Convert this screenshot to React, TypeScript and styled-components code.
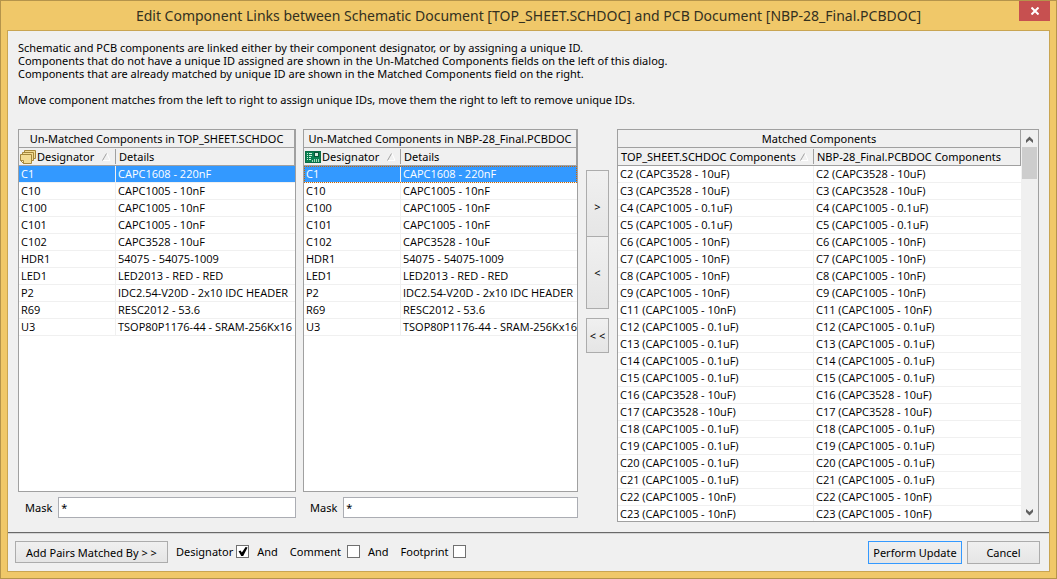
import React from "react";
import styled, { createGlobalStyle, css } from "styled-components";

const GlobalStyle = createGlobalStyle`
  *, *::before, *::after { box-sizing: border-box; }
  body { margin: 0; }
  body, button, input {
    font-family: "Noto Sans", "Open Sans", sans-serif;
    font-size: 11px;
    line-height: 13px;
    color: #000;
  }
`;

const Window = styled.div`
  display: flex;
  flex-direction: column;
  min-height: 100vh;
  padding: 0 6px 6px;
  background: #f0c869;
  border: 1px solid #b5944b;
`;

const TitleBar = styled.header`
  display: flex;
  position: relative;
  justify-content: center;
  height: 29px;
`;

const Title = styled.h1`
  margin: 0;
  font-family: "Noto Sans", "Open Sans", sans-serif;
  font-size: 14px;
  font-weight: 400;
  line-height: 29px;
  color: #33301f;
  white-space: nowrap;
`;

const CloseButton = styled.button`
  position: absolute;
  top: 0;
  right: 0;
  display: flex;
  align-items: center;
  justify-content: center;
  width: 31px;
  height: 20px;
  padding: 0;
  border: 0;
  background: #c75050;
`;

const Client = styled.main`
  display: flex;
  flex: 1;
  flex-direction: column;
  background: #f0f0f0;
  border: 1px solid #c9a552;
`;

const Intro = styled.section`
  padding: 10px 10px 0;
  height: 98px;
  white-space: nowrap;
`;

const Paragraph = styled.p`
  margin: 0 0 13px;
`;

const Workspace = styled.section`
  display: grid;
  grid-template-columns: 560fr 23px 422fr;
  column-gap: 8px;
  flex: 1;
  padding: 0 10px 10px;
`;

const UnmatchedPair = styled.div`
  display: grid;
  grid-template-columns: 278fr 275fr;
  column-gap: 7px;
  padding-bottom: 4px;
  min-width: 0;
`;

const UnmatchedColumn = styled.div`
  display: flex;
  flex-direction: column;
  gap: 5px;
  min-width: 0;
`;

const Panel = styled.div`
  display: flex;
  flex: 1;
  min-width: 0;
  background: #fff;
  border: 1px solid #a0a0a0;
`;

const TableArea = styled.div`
  flex: 1;
  min-width: 0;
`;

const Table = styled.table`
  width: 100%;
  table-layout: fixed;
  border-collapse: separate;
  border-spacing: 0;
`;

const Column = styled.col<{ $width?: string }>`
  width: ${(p) => p.$width ?? "auto"};
`;

const headCell = css`
  height: 18px;
  padding: 0 0 0 3px;
  font-weight: 400;
  background: #f0f0f0;
  border-bottom: 1px solid #a0a0a0;
  white-space: nowrap;
  overflow: hidden;
`;

const GroupHead = styled.th`
  ${headCell}
  padding: 0;
  text-align: center;
  border-right: 1px solid #a0a0a0;
`;

const ColumnHead = styled.th<{ $last?: boolean; $icon?: boolean }>`
  ${headCell}
  padding-left: ${(p) => (p.$icon ? 1 : 3)}px;
  text-align: left;
  border-right: ${(p) => (p.$last ? "1px solid #a0a0a0" : "0")};
`;

const HeadContent = styled.span<{ $gap: number }>`
  display: flex;
  align-items: center;
  gap: ${(p) => p.$gap}px;
  height: 15px;
  border-right: 1px solid #a0a0a0;

  svg { flex: none; }
`;

const SortSlot = styled.span`
  display: flex;
  padding-left: 7px;
`;

const Row = styled.tr<{ $selected?: boolean; $focused?: boolean }>`
  background: ${(p) => (p.$selected ? "#3399ff" : "#fff")};
  color: ${(p) => (p.$selected ? "#fff" : "#000")};
  outline: ${(p) => (p.$focused ? "1px dotted #cc6600" : "none")};
  outline-offset: -1px;
`;

const Cell = styled.td`
  height: 17px;
  padding: 0 0 2px 2px;
  font-family: "Open Sans", "Noto Sans", sans-serif;
  border-bottom: 1px solid #f0f0f0;
  white-space: nowrap;
  overflow: hidden;

  &:first-child { border-right: 1px solid #f0f0f0; }
`;

const MatchedTable = styled(Table)`
  tbody tr:last-child td {
    height: 15px;
    padding-bottom: 0;
    border-bottom: 0;
  }
`;

const MaskRow = styled.label`
  display: flex;
  align-items: center;
  gap: 6px;
  padding-left: 7px;
`;

const MaskInput = styled.input`
  flex: 1;
  min-width: 0;
  height: 21px;
  padding: 0 2px;
  background: #fff;
  border: 1px solid #abadb3;
  border-radius: 0;
`;

const Movers = styled.div`
  display: flex;
  flex-direction: column;
  padding-top: 41px;
`;

const buttonFace = css`
  padding: 0;
  border: 1px solid #acacac;
  border-radius: 0;
  background: linear-gradient(#f0f0f0, #e5e5e5);
`;

const MoveButton = styled.button<{ $height: number; $offset?: number }>`
  ${buttonFace}
  height: ${(p) => p.$height}px;
  margin-top: ${(p) => p.$offset ?? 0}px;
  white-space: nowrap;
`;

const ScrollBar = styled.div`
  display: flex;
  flex-direction: column;
  align-items: center;
  width: 17px;
  padding: 6px 1px 5px;
  background: #f0f0f0;
`;

const ScrollTrack = styled.div`
  flex: 1;
  align-self: stretch;
  padding-top: 4px;
`;

const ScrollThumb = styled.div`
  height: 32px;
  background: #cdcdcd;
`;

const Footer = styled.footer`
  display: flex;
  align-items: flex-start;
  height: 39px;
  padding: 8px 9px 0 7px;
  border-top: 1px solid #696969;
  box-shadow: inset 0 1px 0 #d4d4d4;
`;

const PushButton = styled.button<{ $width: number; $primary?: boolean; $short?: boolean }>`
  ${buttonFace}
  width: ${(p) => p.$width}px;
  height: ${(p) => (p.$short ? 22 : 23)}px;
  border-color: ${(p) => (p.$primary ? "#3399ff" : "#acacac")};
`;

const Criteria = styled.div`
  display: flex;
  flex: 1;
  align-items: center;
  height: 21px;
  padding-left: 8px;
`;

const Criterion = styled.label<{ $gap: number }>`
  display: flex;
  align-items: center;
  gap: ${(p) => p.$gap}px;
`;

const Joiner = styled.span`
  margin: 0 12px 0 8px;
`;

const CheckBox = styled.input`
  appearance: none;
  width: 13px;
  height: 13px;
  margin: 0;
  background: #fff;
  border: 1px solid #707070;

  &:checked::before {
    content: "";
    display: block;
    width: 11px;
    height: 11px;
    background: #000;
    clip-path: polygon(12% 48%, 30% 42%, 42% 60%, 76% 8%, 94% 14%, 54% 92%, 36% 92%);
  }
`;

const Actions = styled.div`
  display: flex;
  gap: 5px;
`;

const SheetsIcon = () => (
  <svg width="16" height="14" viewBox="0 0 16 14" aria-hidden="true">
    <g fill="#f3dc94" stroke="#a5873c">
      <path d="M4.5 .5h11v8h-11z" />
      <path d="M2.5 2.5h11v8h-11z" />
      <path d="M.5 4.5h11v9H3.500l-3-3z" />
      <path d="M.5 10.500h3v3z" fill="#fff6d0" />
    </g>
  </svg>
);

const BoardIcon = () => (
  <svg width="16" height="13" viewBox="0 0 16 13" aria-hidden="true">
    <path d="M0 1h16v12H0z" fill="#0a6b45" />
    <path d="M1 2h14v10H1z" fill="#0b8152" />
    <path d="M2 3h1v1H2zM2 5h1v1H2zM2 7h1v1H2zM2 9h1v1H2zM4 3h3v1H4zM4 5h3v1H4zM4 7h2v1H4zM4 9h2v1H4z" fill="#cdeedb" />
    <path d="M9 2h5v5H9z" fill="#0a5438" />
    <path d="M10 3h3v3h-3z" fill="#d5ecde" />
    <path d="M7 10h1v2H7zM9 9h1v3H9zM11 9h1v3h-1zM13 9h1v3h-1z" fill="#a4d8bb" />
  </svg>
);

const SortIcon = () => (
  <svg width="9" height="8" viewBox="0 0 9 8" aria-hidden="true">
    <path d="M5 .5l3 7H1" fill="none" stroke="#fff" />
    <path d="M.5 7.500L4.500 .5" fill="none" stroke="#a0a0a0" />
  </svg>
);

const Arrow = ({ down }: { down?: boolean }) => (
  <svg width="9" height="7" viewBox="0 0 9 7" aria-hidden="true">
    <path
      d={down ? "M1 0l3.500 3L8 0v3L4.500 6.500 1 3z" : "M1 7l3.500-3L8 7V4L4.500 .5 1 4z"}
      fill="#606060"
    />
  </svg>
);

const unmatched = [
  ["C1", "CAPC1608 - 220nF"],
  ["C10", "CAPC1005 - 10nF"],
  ["C100", "CAPC1005 - 10nF"],
  ["C101", "CAPC1005 - 10nF"],
  ["C102", "CAPC3528 - 10uF"],
  ["HDR1", "54075 - 54075-1009"],
  ["LED1", "LED2013 - RED - RED"],
  ["P2", "IDC2.54-V20D - 2x10 IDC HEADER"],
  ["R69", "RESC2012 - 53.6"],
  ["U3", "TSOP80P1176-44 - SRAM-256Kx16"],
];

const matched = [
  "C2 (CAPC3528 - 10uF)",
  "C3 (CAPC3528 - 10uF)",
  "C4 (CAPC1005 - 0.1uF)",
  "C5 (CAPC1005 - 0.1uF)",
  "C6 (CAPC1005 - 10nF)",
  "C7 (CAPC1005 - 10nF)",
  "C8 (CAPC1005 - 10nF)",
  "C9 (CAPC1005 - 10nF)",
  "C11 (CAPC1005 - 10nF)",
  "C12 (CAPC1005 - 0.1uF)",
  "C13 (CAPC1005 - 0.1uF)",
  "C14 (CAPC1005 - 0.1uF)",
  "C15 (CAPC1005 - 0.1uF)",
  "C16 (CAPC3528 - 10uF)",
  "C17 (CAPC3528 - 10uF)",
  "C18 (CAPC1005 - 0.1uF)",
  "C19 (CAPC1005 - 0.1uF)",
  "C20 (CAPC1005 - 0.1uF)",
  "C21 (CAPC1005 - 0.1uF)",
  "C22 (CAPC1005 - 10nF)",
  "C23 (CAPC1005 - 10nF)",
];

type UnmatchedProps = { title: string; icon: React.ReactNode; focused?: boolean };

const Unmatched = ({ title, icon, focused }: UnmatchedProps) => (
  <UnmatchedColumn>
    <Panel>
      <TableArea>
        <Table>
          <colgroup>
            <Column $width="97px" />
            <Column />
          </colgroup>
          <thead>
            <tr>
              <GroupHead colSpan={2}>{title}</GroupHead>
            </tr>
            <tr>
              <ColumnHead $icon>
                <HeadContent $gap={1}>
                  {icon}
                  Designator
                  <SortSlot>
                    <SortIcon />
                  </SortSlot>
                </HeadContent>
              </ColumnHead>
              <ColumnHead $last>Details</ColumnHead>
            </tr>
          </thead>
          <tbody>
            {unmatched.map(([name, details], i) => (
              <Row key={name} $selected={i === 0} $focused={focused && i === 0}>
                <Cell>{name}</Cell>
                <Cell>{details}</Cell>
              </Row>
            ))}
          </tbody>
        </Table>
      </TableArea>
    </Panel>
    <MaskRow>
      Mask
      <MaskInput type="text" defaultValue="*" />
    </MaskRow>
  </UnmatchedColumn>
);

export default function App() {
  return (
    <>
      <GlobalStyle />
      <Window>
        <TitleBar>
          <Title>
            Edit Component Links between Schematic Document [TOP_SHEET.SCHDOC] and PCB Document [NBP-28_Final.PCBDOC]
          </Title>
          <CloseButton type="button" aria-label="Close">
            <svg width="8" height="8" viewBox="0 0 8 8" aria-hidden="true">
              <path d="M.5 .5l7 7M7.500 .5l-7 7" stroke="#fff" strokeWidth="2" />
            </svg>
          </CloseButton>
        </TitleBar>
        <Client>
          <Intro>
            <Paragraph>
              Schematic and PCB components are linked either by their component designator, or by assigning a unique ID.
              <br />
              Components that do not have a unique ID assigned are shown in the Un-Matched Components fields on the left of this dialog.
              <br />
              Components that are already matched by unique ID are shown in the Matched Components field on the right.
            </Paragraph>
            <Paragraph>
              Move component matches from the left to right to assign unique IDs, move them the right to left to remove unique IDs.
            </Paragraph>
          </Intro>
          <Workspace>
            <UnmatchedPair>
              <Unmatched title="Un-Matched Components in TOP_SHEET.SCHDOC" icon={<SheetsIcon />} />
              <Unmatched title="Un-Matched Components in NBP-28_Final.PCBDOC" icon={<BoardIcon />} focused />
            </UnmatchedPair>
            <Movers>
              <MoveButton type="button" $height={73}>&gt;</MoveButton>
              <MoveButton type="button" $height={73} $offset={-7}>&lt;</MoveButton>
              <MoveButton type="button" $height={35} $offset={9}>&lt; &lt;</MoveButton>
            </Movers>
            <Panel>
              <TableArea>
                <MatchedTable>
                  <colgroup>
                    <Column $width="196px" />
                    <Column />
                  </colgroup>
                  <thead>
                    <tr>
                      <GroupHead colSpan={2}>Matched Components</GroupHead>
                    </tr>
                    <tr>
                      <ColumnHead>
                        <HeadContent $gap={4}>
                          TOP_SHEET.SCHDOC Components
                          <SortIcon />
                        </HeadContent>
                      </ColumnHead>
                      <ColumnHead $last>NBP-28_Final.PCBDOC Components</ColumnHead>
                    </tr>
                  </thead>
                  <tbody>
                    {matched.map((name) => (
                      <Row key={name}>
                        <Cell>{name}</Cell>
                        <Cell>{name}</Cell>
                      </Row>
                    ))}
                  </tbody>
                </MatchedTable>
              </TableArea>
              <ScrollBar>
                <Arrow />
                <ScrollTrack>
                  <ScrollThumb />
                </ScrollTrack>
                <Arrow down />
              </ScrollBar>
            </Panel>
          </Workspace>
          <Footer>
            <PushButton type="button" $width={153} $short>Add Pairs Matched By &gt; &gt;</PushButton>
            <Criteria>
              <Criterion $gap={3}>
                Designator
                <CheckBox type="checkbox" defaultChecked />
              </Criterion>
              <Joiner>And</Joiner>
              <Criterion $gap={6}>
                Comment
                <CheckBox type="checkbox" />
              </Criterion>
              <Joiner>And</Joiner>
              <Criterion $gap={4}>
                Footprint
                <CheckBox type="checkbox" />
              </Criterion>
            </Criteria>
            <Actions>
              <PushButton type="button" $width={94} $primary>Perform Update</PushButton>
              <PushButton type="button" $width={73}>Cancel</PushButton>
            </Actions>
          </Footer>
        </Client>
      </Window>
    </>
  );
}
